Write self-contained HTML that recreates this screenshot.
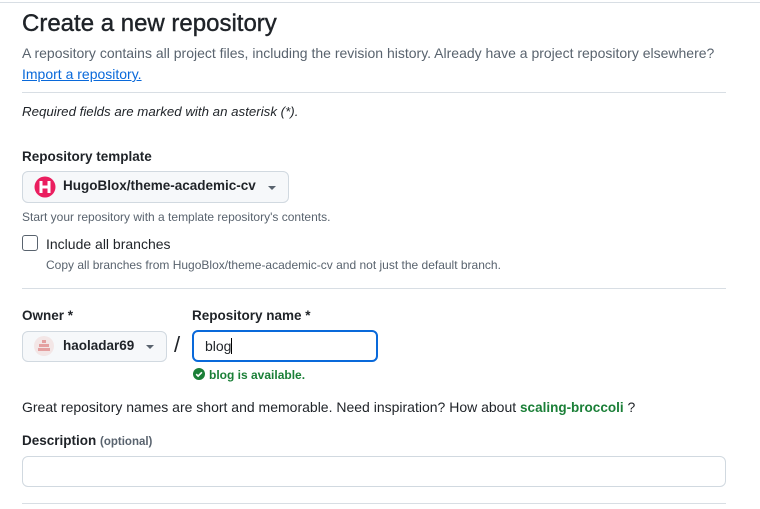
<!DOCTYPE html>
<html><head><style>
body{margin:0;width:760px;height:509px;background:#fff;font-family:"Liberation Sans",sans-serif;color:#1f2328;position:relative;overflow:hidden}
.a{position:absolute;white-space:nowrap}
.hr{position:absolute;left:22px;width:704px;height:1px;background:#d8dee4}
.btn{position:absolute;background:#f6f8fa;border:1px solid #d1d9e0;border-radius:6px;box-sizing:border-box}
.caret{position:absolute;width:0;height:0;border-left:4px solid transparent;border-right:4px solid transparent;border-top:4px solid #59636e}
b,.bd{font-weight:bold;font-size:13.5px}
</style></head><body>
<div style="position:absolute;left:0;top:2px;width:760px;height:1px;background:#d8dee4"></div>
<div class="a" style="left:22px;top:10px;font-size:24px;-webkit-text-stroke:0.4px #1f2328">Create a new repository</div>
<div class="a" style="left:22px;top:45px;font-size:14px;color:#59636e">A repository contains all project files, including the revision history. Already have a project repository elsewhere?</div>
<div class="a" style="left:22px;top:66px;font-size:14px;color:#0969da;text-decoration:underline">Import a repository.</div>
<div class="hr" style="top:92px"></div>
<div class="a" style="left:22px;top:104px;font-size:13.3px;font-style:italic">Required fields are marked with an asterisk (*).</div>
<div class="a bd" style="left:22px;top:149px">Repository template</div>
<div class="btn" style="left:22px;top:171px;width:267px;height:32px"></div>
<svg class="a" style="left:34px;top:176px" width="22" height="22" viewBox="0 0 22 22"><circle cx="11" cy="11" r="10.5" fill="#ea1e5f"/><path d="M7 5v12M15 5v12M7 11h8" stroke="#fff" stroke-width="3"/></svg>
<div class="a bd" style="left:63px;top:178px">HugoBlox/theme-academic-cv</div>
<div class="caret" style="left:268px;top:186px"></div>
<div class="a" style="left:22px;top:210px;font-size:12px;color:#59636e">Start your repository with a template repository's contents.</div>
<div class="a" style="left:22px;top:235px;width:14px;height:14px;border:1px solid #59636e;border-radius:3px"></div>
<div class="a" style="left:46px;top:236px;font-size:14px">Include all branches</div>
<div class="a" style="left:46px;top:258px;font-size:12px;color:#59636e">Copy all branches from HugoBlox/theme-academic-cv and not just the default branch.</div>
<div class="hr" style="top:288px"></div>
<div class="a bd" style="left:22px;top:308px">Owner *</div>
<div class="a bd" style="left:192px;top:308px">Repository name *</div>
<div class="btn" style="left:22px;top:331px;width:145px;height:31px"></div>
<svg class="a" style="left:34px;top:336px" width="20" height="20"><circle cx="10" cy="10" r="10" fill="#f3e6e6"/><rect x="8" y="4" width="4" height="3" fill="#e4a0a0"/><rect x="5" y="8" width="10" height="3" fill="#e4a0a0"/><rect x="4" y="12" width="12" height="3" fill="#e4a0a0"/></svg>
<div class="a bd" style="left:63px;top:338px">haoladar69</div>
<div class="caret" style="left:146px;top:345px"></div>
<div class="a" style="left:174px;top:332px;font-size:22px;color:#1f2328">/</div>
<div class="a" style="left:192px;top:330px;width:186px;height:32px;border:2px solid #0969da;border-radius:6px;box-sizing:border-box"></div>
<div class="a" style="left:205px;top:338px;font-size:14px">blog<span style="display:inline-block;width:1px;height:16px;background:#000;vertical-align:-3px"></span></div>
<svg class="a" style="left:193px;top:368px" width="12" height="12" viewBox="0 0 12 12"><circle cx="6" cy="6" r="6" fill="#1a7f37"/><path d="M3.2 6.2l1.9 1.9 3.8-3.8" stroke="#fff" stroke-width="1.6" fill="none"/></svg>
<div class="a" style="left:209px;top:368px;font-size:12px;font-weight:bold;color:#1a7f37">blog is available.</div>
<div class="a" style="left:22px;top:399px;font-size:14px">Great repository names are short and memorable. Need inspiration? How about <b style="color:#1a7f37">scaling-broccoli</b> ?</div>
<div class="a bd" style="left:22px;top:433px">Description <span style="font-size:11.5px;color:#59636e">(optional)</span></div>
<div class="a" style="left:22px;top:456px;width:704px;height:31px;border:1px solid #d1d9e0;border-radius:6px;box-sizing:border-box"></div>
<div class="hr" style="top:503px"></div>
</body></html>
